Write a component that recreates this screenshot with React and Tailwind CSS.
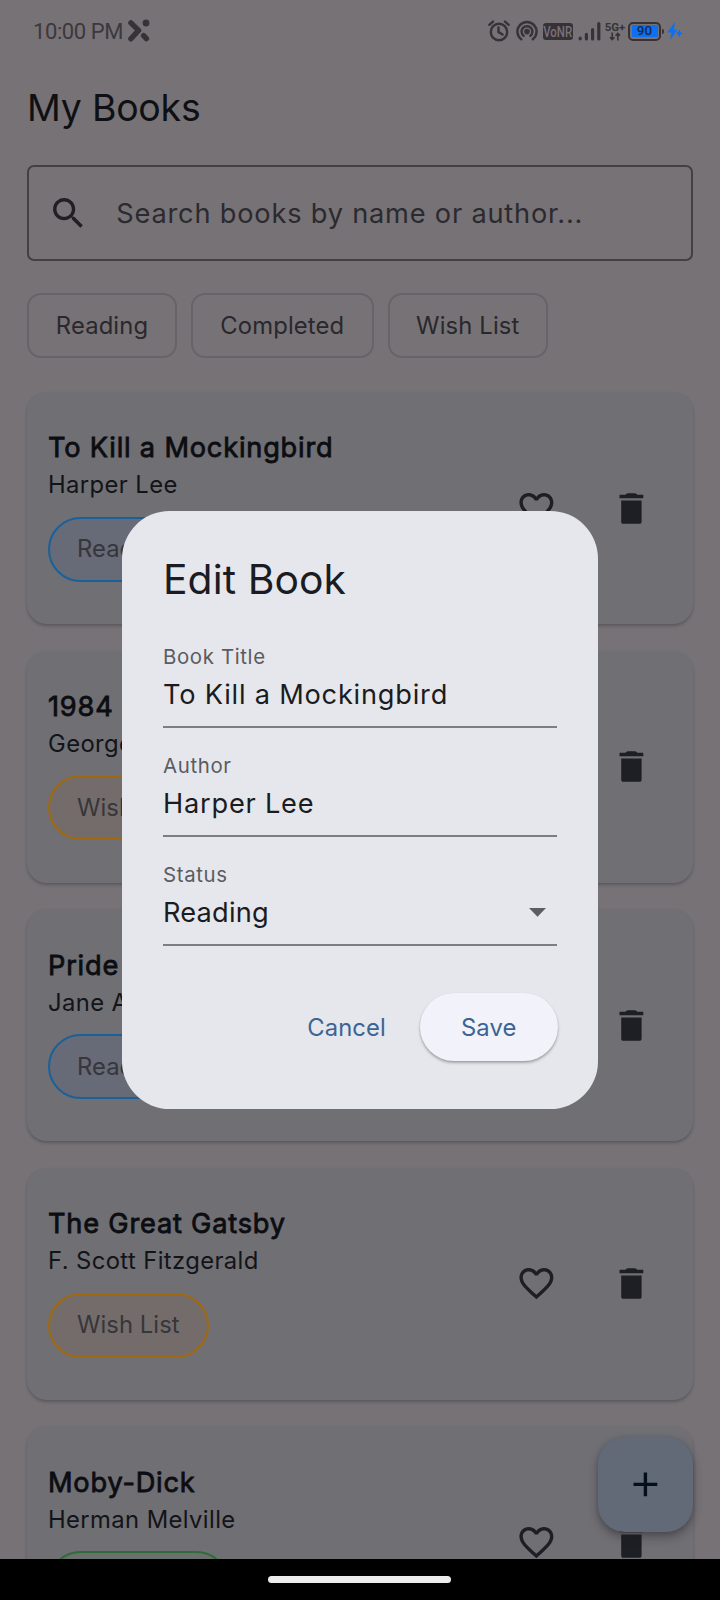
import React from "react";

const statusStyles = {
  Reading: "border-[#1a619a] bg-[#676a77]",
  "Wish List": "border-[#a0690f] bg-[#746c6a]",
  Completed: "border-[#2f6c3b] bg-[#6a716d]",
};

const books = [
  { title: "To Kill a Mockingbird", author: "Harper Lee", status: "Reading" },
  { title: "1984", author: "George Orwell", status: "Wish List" },
  { title: "Pride and Prejudice", author: "Jane Austen", status: "Reading" },
  { title: "The Great Gatsby", author: "F. Scott Fitzgerald", status: "Wish List" },
  { title: "Moby-Dick", author: "Herman Melville", status: "Completed" },
];

function Icon({ d, className }) {
  return (
    <svg viewBox="0 0 24 24" fill="currentColor" className={className}>
      <path d={d} />
    </svg>
  );
}

const SEARCH =
  "M15.5 14h-.79l-.28-.27C15.41 12.59 16 11.11 16 9.5 16 5.91 13.09 3 9.5 3S3 5.91 3 9.5 5.91 16 9.5 16c1.61 0 3.09-.59 4.23-1.57l.27.28v.79l5 4.99L20.49 19l-4.99-5zm-6 0C7.01 14 5 11.99 5 9.5S7.01 5 9.5 5 14 7.01 14 9.5 11.99 14 9.5 14z";
const HEART =
  "M16.5 3c-1.74 0-3.41.81-4.5 2.09C10.91 3.81 9.24 3 7.5 3 4.42 3 2 5.42 2 8.5c0 3.78 3.4 6.86 8.55 11.54L12 21.35l1.45-1.32C18.6 15.36 22 12.28 22 8.5 22 5.42 19.58 3 16.5 3zm-4.4 15.55l-.1.1-.1-.1C7.14 14.24 4 11.39 4 8.5 4 6.5 5.5 5 7.5 5c1.54 0 3.04.99 3.57 2.36h1.87C13.46 5.99 14.96 5 16.5 5c2 0 3.5 1.5 3.5 3.5 0 2.89-3.14 5.74-7.9 10.05z";
const TRASH =
  "M6 19.8c0 .7.5 1.2 1.2 1.2h9.6c.7 0 1.2-.5 1.2-1.2V7.3H6v12.5zM18.7 4H15.5c-.6-.6-1-.9-1.7-.9h-3.6c-.7 0-1.1.3-1.7.9H5.3c-.2 0-.3.1-.3.3v1.4c0 .2.1.3.3.3h13.4c.2 0 .3-.1.3-.3V4.3c0-.2-.1-.3-.3-.3z";
const PLUS = "M19 13h-6v6h-2v-6H5v-2h6V5h2v6h6v2z";

function StatusBar() {
  return (
    <div className="flex h-[62px] shrink-0 items-center pl-[33px] pr-[37px] text-[#373237]">
      <span className="w-[94px] whitespace-nowrap pt-px font-['Roboto'] text-[22px] leading-[26px] tracking-[-0.4px] text-[#3c383d]">
        10:00 PM
      </span>
      <svg width="23" height="24" viewBox="0 0 23 24" fill="none" stroke="currentColor" strokeWidth="5.4" strokeLinecap="round">
        <path d="M3.9 3.8 11.6 11.4 3.9 19.8" strokeLinejoin="round" />
        <path d="M16.6 16.6 19.4 19.6" />
        <circle cx="19" cy="4" r="3.4" fill="currentColor" stroke="none" />
      </svg>
      <div className="ml-auto flex items-center">
        <svg width="22" height="22" viewBox="0 0 22 22" fill="none" stroke="currentColor" strokeWidth="2.4" strokeLinecap="round">
          <circle cx="11" cy="12" r="8.2" />
          <path d="M10.5 7.5V12l4 2.6M1.3 4.8 5 1.6M20.7 4.8 17 1.6" />
        </svg>
        <svg className="ml-[6px]" width="22" height="22" viewBox="0 0 22 22" fill="none" stroke="currentColor" strokeWidth="2.4" strokeLinecap="round">
          <circle cx="11" cy="11.6" r="2.8" fill="currentColor" stroke="none" />
          <path d="M5.2 19.2a9.6 9.6 0 1 1 11.6 0M7.6 15.8a5.4 5.4 0 1 1 6.8 0" />
        </svg>
        <span className="ml-[5px] flex h-[17px] w-[30px] items-center justify-center rounded-[3px] bg-[#373237]">
          <span className="translate-y-px scale-x-[.82] font-['Roboto'] text-[14px] font-medium leading-none text-[#777277]">VoNR</span>
        </span>
        <svg className="ml-[5px]" width="23" height="20" viewBox="0 0 23 20" fill="none" stroke="currentColor" strokeWidth="3.2" strokeLinecap="round">
          <path d="M2.2 17.2v.6M8.4 13.4v4.6M14.6 8.6V18M20.8 2.6V18" />
        </svg>
        <span className="ml-[4px] flex w-[20px] flex-col items-center">
          <span className="h-[10px] whitespace-nowrap font-['Roboto'] text-[11.5px] font-bold leading-[10px]">5G+</span>
          <svg width="12" height="9" viewBox="0 0 12 9" fill="none" stroke="currentColor" strokeWidth="1.6">
            <path d="M3.2.5v7M1 5.2l2.2 2.4 2.2-2.4M8.8 8.500v-7M6.6 3.8 8.8 1.4 11 3.8" />
          </svg>
        </span>
        <span className="ml-[3px] flex h-[19px] w-[33px] items-center justify-center rounded-[5px] border-2 border-[#373237] p-[1.5px]">
          <span className="flex h-full w-full items-center justify-center rounded-[1px] bg-[#0d70f2] font-['Roboto'] text-[13.5px] font-medium leading-none text-[#17294a]">
            90
          </span>
        </span>
        <span className="ml-px h-[5px] w-[2px] rounded-r bg-[#373237]" />
        <svg className="ml-[3px]" width="16" height="20" viewBox="0 0 16 20" fill="#0d70f2">
          <path d="M8.2.8.2 11.400h4L3.400 19 10.400 8.800H6.800zM12.200 8.400l1.200 2.900 2.500 1.200-2.500 1.200-1.200 2.900-1.200-2.900-2.200-1.200 2.200-1.200z" />
        </svg>
      </div>
    </div>
  );
}

function FilterChip({ label, width }) {
  return (
    <span
      className={`flex h-[65px] items-center justify-center rounded-[14px] border-2 border-[#686368] text-[23.8px] tracking-[0.13px] text-[#29282d] ${width}`}
    >
      {label}
    </span>
  );
}

function BookCard({ book }) {
  return (
    <div className="flex h-[232px] shrink-0 items-center rounded-[20px] bg-[#6f6f74] pl-[21.5px] pr-[41px] shadow-[0_2px_3px_rgba(40,40,48,0.35)]">
      <div className="flex flex-1 flex-col items-start self-stretch pt-[35.4px]">
        <div className="text-[27.2px] leading-[41px] tracking-[0.8px] text-[#0c0d11] [-webkit-text-stroke:0.8px_#0c0d11]">{book.title}</div>
        <div className="text-[23.8px] leading-[34px] tracking-[0.4px] text-[#131418]">{book.author}</div>
        <div
          className={`mt-[14.4px] flex h-[65px] items-center rounded-full border-2 px-[27px] text-[23.8px] tracking-[0.06px] text-[#36363b] ${statusStyles[book.status]}`}
        >
          {book.status}
        </div>
      </div>
      <Icon d={HEART} className="size-[40.8px] text-[#1e1f24]" />
      <Icon d={TRASH} className="ml-[54px] size-[40.8px] text-[#1e1f24]" />
    </div>
  );
}

function Field({ label, value, dropdown }) {
  return (
    <div className="h-[108.8px]">
      <div className="text-[20.4px] leading-6 tracking-[0.64px] text-[#5a5c61]">{label}</div>
      <div className="mt-[6px] flex items-center justify-between border-b-2 border-[#7c7d83] pb-[11px]">
        <span className={`text-[27.2px] leading-10 text-[#1a1c21] ${dropdown ? "tracking-[0.2px]" : "tracking-[0.78px]"}`}>{value}</span>
        {dropdown && (
          <svg width="17" height="9" viewBox="0 0 17 9" fill="#5c5e62" className="mr-[11.5px]">
            <path d="M0 0h17L8.5 8.7z" />
          </svg>
        )}
      </div>
    </div>
  );
}

function EditDialog() {
  return (
    <div className="absolute left-[122px] top-[511px] h-[598px] w-[476px] rounded-[47.6px] bg-[#e6e7ec] px-[41px] pt-[40.5px] text-[#1a1c21]">
      <h2 className="text-[40.8px] leading-[54px] tracking-[0.1px]">Edit Book</h2>
      <div className="mt-[39.5px]">
        <Field label="Book Title" value="To Kill a Mockingbird" />
        <Field label="Author" value="Harper Lee" />
        <Field label="Status" value="Reading" dropdown />
      </div>
      <div className="-mr-[0.5px] mt-[22px] flex items-center justify-end text-[23.8px] tracking-[0.13px] text-[#3c6492]">
        <button className="mr-[34px]">Cancel</button>
        <button className="h-[68px] w-[137.5px] rounded-full bg-[#f1f2fa] shadow-[0_2px_3px_rgba(0,0,0,0.25),0_1px_2px_rgba(0,0,0,0.1)]">Save</button>
      </div>
    </div>
  );
}

export default function App() {
  return (
    <div className="relative flex h-[1600px] w-[720px] flex-col overflow-hidden bg-[#777276] font-['Inter',sans-serif]">
      <main className="relative flex min-h-0 flex-1 flex-col overflow-hidden">
        <StatusBar />
        <h1 className="mt-[24px] shrink-0 px-[27px] text-[37.4px] leading-[44px] tracking-[-0.2px] text-[#0f1014]">My Books</h1>
        <div className="mx-[27px] mt-[35px] flex h-[96px] shrink-0 items-center rounded-[7px] border-2 border-[#434044] pl-[18.5px]">
          <Icon d={SEARCH} className="size-[40.8px] text-[#202024]" />
          <span className="ml-[28px] mt-[2px] text-[27.2px] tracking-[0.8px] text-[#2a2a2f]">Search books by name or author...</span>
        </div>
        <div className="mx-[27px] mt-[32px] flex shrink-0 gap-[14px]">
          <FilterChip label="Reading" width="w-[150px]" />
          <FilterChip label="Completed" width="w-[182.5px]" />
          <FilterChip label="Wish List" width="w-[160.5px]" />
        </div>
        <div className="ml-[26.5px] mr-[27.5px] mt-[34px] flex flex-col gap-[26.6px]">
          {books.map((b) => (
            <BookCard key={b.title} book={b} />
          ))}
        </div>
        <button className="absolute bottom-[27px] right-[27.5px] flex size-[95px] items-center justify-center rounded-[27px] bg-[#626a77] text-[#040f1e] shadow-[0_5px_10px_rgba(30,30,36,0.4),0_1px_4px_rgba(30,30,36,0.15)]">
          <Icon d={PLUS} className="size-[40.8px]" />
        </button>
      </main>
      <div className="flex h-[41px] shrink-0 items-center justify-center bg-black pr-px">
        <div className="h-[7px] w-[183px] rounded-full bg-[#ececec]" />
      </div>
      <EditDialog />
    </div>
  );
}
